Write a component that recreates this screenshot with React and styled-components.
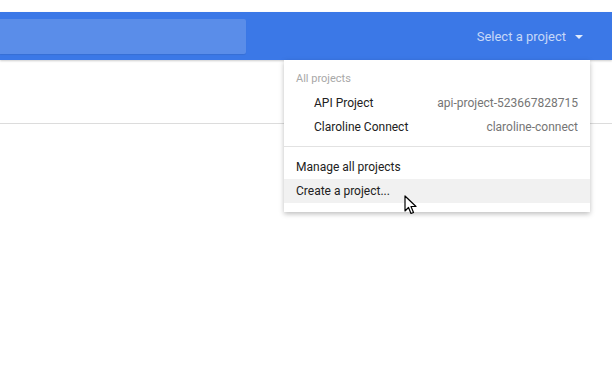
import React from 'react'
import styled, { createGlobalStyle } from 'styled-components'

const Global = createGlobalStyle`
  html, body { margin: 0; padding: 0; background: #fff; }
  body { font-family: Roboto, "Noto Sans", sans-serif; overflow: hidden; }
`

const Page = styled.div`
  position: relative;
  width: 612px;
  height: 374px;
  padding-top: 12px;
  box-sizing: border-box;
`

const Bar = styled.div`
  height: 48px;
  background: #3b78e7;
  display: flex;
  align-items: center;
  justify-content: space-between;
  box-shadow: 0 1px 2px rgba(0,0,0,0.2);
  position: relative;
  z-index: 1;
`

const Search = styled.div`
  width: 246px;
  height: 35px;
  background: #5a8de9;
  border-radius: 0 2px 2px 0;
  box-shadow: 0 1px 1px rgba(0,0,0,0.08);
`

const Picker = styled.div`
  display: flex;
  align-items: center;
  gap: 9px;
  padding-right: 29px;
  color: rgba(255,255,255,0.72);
  font-size: 13px;
`

const Caret = styled.span`
  width: 0;
  height: 0;
  border-left: 4px solid transparent;
  border-right: 4px solid transparent;
  border-top: 4px solid rgba(255,255,255,0.85);
  margin-top: 2px;
`

const Toolbar = styled.div`
  height: 63px;
  border-bottom: 1px solid #dcdcdc;
`

const Menu = styled.div`
  position: absolute;
  left: 284px;
  top: 60px;
  width: 306px;
  background: #fff;
  box-shadow: 0 2px 5px rgba(0,0,0,0.26);
  padding: 7px 0 9px;
  z-index: 2;
  font-size: 12px;
  color: #212121;
`

const Label = styled.div`
  height: 24px;
  line-height: 24px;
  padding-left: 12px;
  font-size: 11px;
  color: #a8a8a8;
`

const Row = styled.div`
  height: 24px;
  display: flex;
  align-items: center;
  justify-content: space-between;
  padding: 0 12px 0 ${p => (p.$nested ? 30 : 12)}px;
  background: ${p => (p.$hover ? '#f1f1f1' : 'transparent')};
`

const Id = styled.span`
  color: #757575;
`

const Divider = styled.div`
  height: 1px;
  background: #e2e2e2;
  margin: 7px 0 8px;
`

const Cursor = styled.svg`
  position: absolute;
  left: 404px;
  top: 195px;
  z-index: 3;
`

export default function App() {
  return (
    <Page>
      <Global />
      <Bar>
        <Search />
        <Picker>
          Select a project
          <Caret />
        </Picker>
      </Bar>
      <Toolbar />
      <Menu>
        <Label>All projects</Label>
        <Row $nested>
          <span>API Project</span>
          <Id>api-project-523667828715</Id>
        </Row>
        <Row $nested>
          <span>Claroline Connect</span>
          <Id>claroline-connect</Id>
        </Row>
        <Divider />
        <Row>Manage all projects</Row>
        <Row $hover>Create a project...</Row>
      </Menu>
      <Cursor width="14" height="22" viewBox="0 0 14 22">
        <path d="M1 1 L1 16 L4.5 12.5 L7 18.5 L9.5 17.5 L7 11.5 L12 11.5 Z" fill="#fff" stroke="#000" strokeWidth="1.2" strokeLinejoin="round" />
      </Cursor>
    </Page>
  )
}
